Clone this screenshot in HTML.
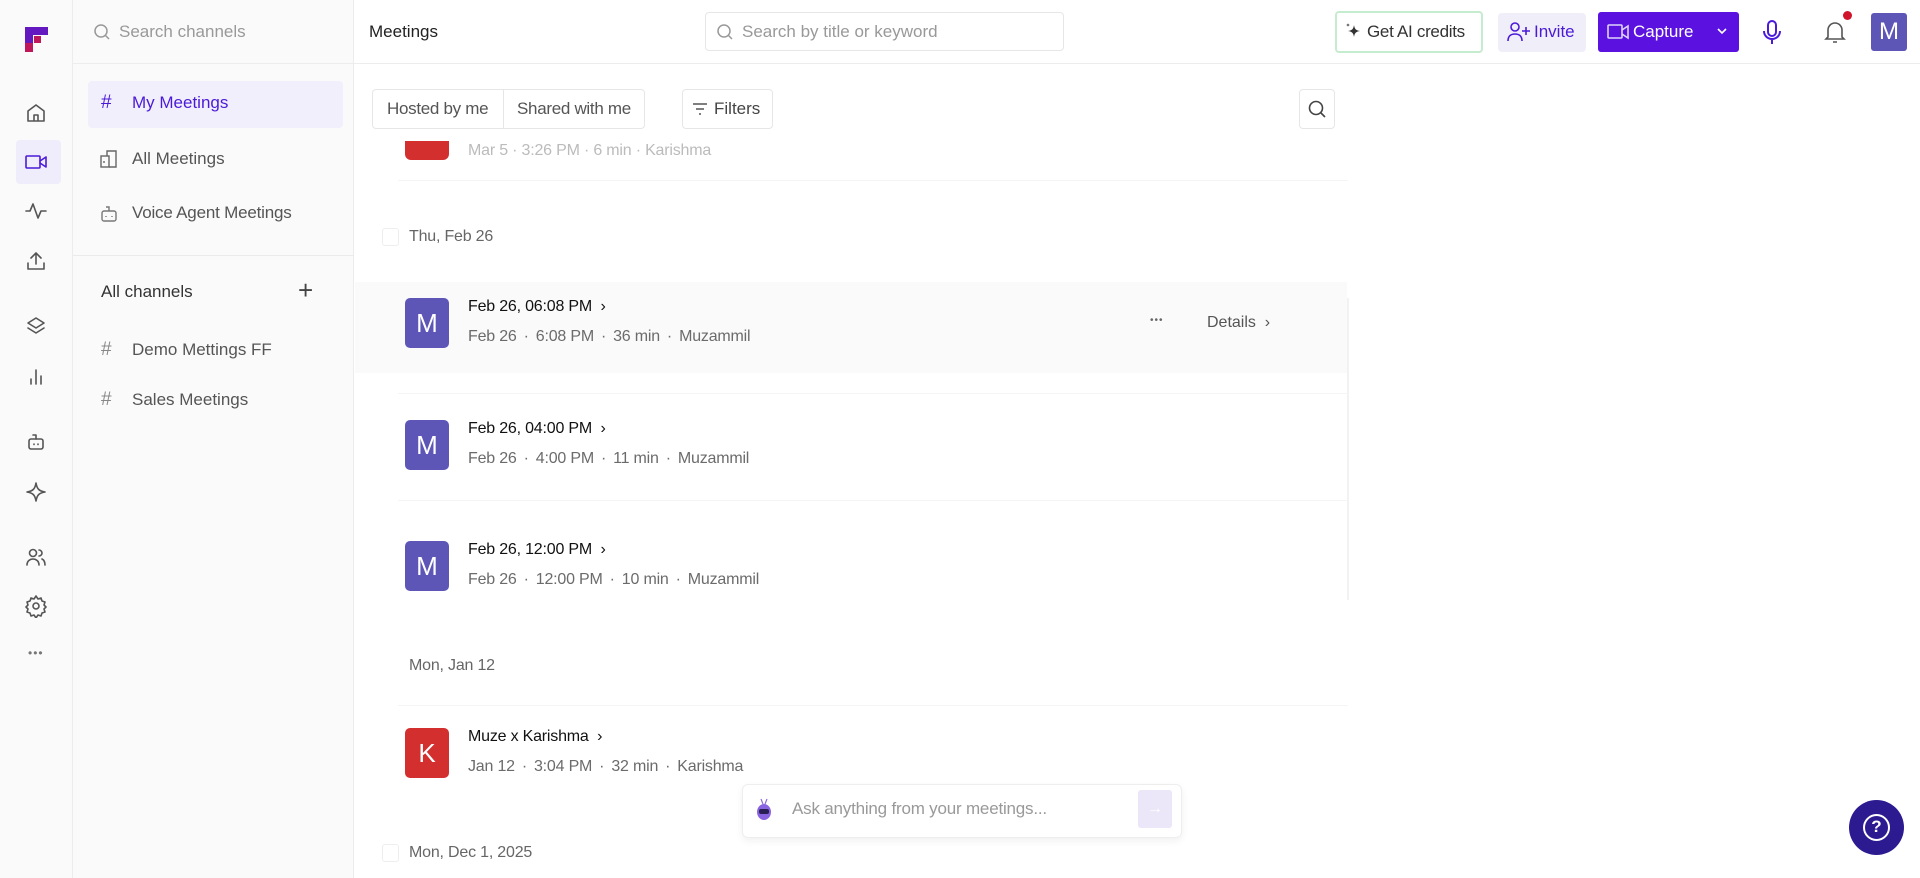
<!DOCTYPE html>
<html><head><meta charset="utf-8"><style>
*{box-sizing:border-box;margin:0;padding:0}
body{width:1920px;height:878px;overflow:hidden;background:#fff;font-family:"Liberation Sans",sans-serif;color:#1f1f1f;position:relative}
.abs{position:absolute}
.rail{left:0;top:0;width:73px;height:878px;background:#fafafa;border-right:1px solid #ececec}
.side{left:73px;top:0;width:281px;height:878px;background:#fafafa;border-right:1px solid #ececec}
.ic{position:absolute;left:24px;width:24px;height:24px;fill:none;stroke:#555;stroke-width:1.6;stroke-linecap:round;stroke-linejoin:round}
.t{position:absolute;white-space:nowrap}
.sub{color:#6b6b6b;font-size:16px;letter-spacing:-0.2px}
.av{position:absolute;left:405px;width:44px;height:50px;border-radius:5px;background:#5d56b7;color:#fff;font-size:26px;text-align:center;line-height:50px}
.sep{position:absolute;height:1px;background:#f5f5f5}
.d{margin:0 7px}
</style></head><body>
<div class="abs rail"></div>
<div class="abs side"></div>
<div class="abs" style="left:354px;top:63px;width:1566px;height:1px;background:#ededed"></div>
<div class="abs" style="left:73px;top:63px;width:281px;height:1px;background:#ededed"></div>

<svg class="abs" style="left:24px;top:26px" width="26" height="27" viewBox="0 0 26 27"><path d="M1 1h23v8H9v17H1z" fill="#c0175a"/><path d="M1 1h23v8H9v8H1z" fill="#4b1ad8" opacity=".8"/><rect x="10" y="10" width="7" height="7" fill="#c0175a"/></svg>

<svg class="ic" style="top:101px" viewBox="0 0 24 24"><path d="M4 10l8-6 8 6v10H4z M10 20v-6h4v6"/></svg>
<div class="abs" style="left:16px;top:140px;width:45px;height:44px;background:#efedfb;border-radius:4px"></div>
<svg class="ic" style="top:150px;stroke:#4b1ad8" viewBox="0 0 24 24"><rect x="2" y="6" width="14" height="12" rx="1"/><path d="M16 11l6-4v10l-6-4"/></svg>
<svg class="ic" style="top:199px" viewBox="0 0 24 24"><path d="M2 12h4l3-7 5 14 3-7h5"/></svg>
<svg class="ic" style="top:249px" viewBox="0 0 24 24"><path d="M12 15V4M7 9l5-5 5 5M4 14v6h16v-6"/></svg>
<svg class="ic" style="top:315px" viewBox="0 0 24 24"><path d="M12 3l8 5-8 5-8-5z M4 13l8 5 8-5"/></svg>
<svg class="ic" style="top:364px" viewBox="0 0 24 24"><path d="M7 20v-5M12 20V6M17 20v-8"/></svg>
<svg class="ic" style="top:430px" viewBox="0 0 24 24"><rect x="5" y="9" width="14" height="10" rx="2"/><path d="M12 9V5h-3M10 14v.5M14 14v.5"/></svg>
<svg class="ic" style="top:480px" viewBox="0 0 24 24"><path d="M12 3c1 6 3 8 9 9-6 1-8 3-9 9-1-6-3-8-9-9 6-1 8-3 9-9z"/></svg>
<svg class="ic" style="top:545px" viewBox="0 0 24 24"><circle cx="9" cy="8" r="3.5"/><path d="M3 20c0-4 3-6 6-6s6 2 6 6M15 5a3 3 0 010 6M18 14c2 1 3 3 3 6"/></svg>
<svg class="ic" style="top:594px" viewBox="0 0 24 24"><circle cx="12" cy="12" r="3"/><path d="M12 2l2 3 3-1 1 3 3 1-1 3 2 2-2 2 1 3-3 1-1 3-3-1-2 3-2-3-3 1-1-3-3-1 1-3-2-2 2-2-1-3 3-1 1-3 3 1z"/></svg>
<div class="t" style="left:28px;top:646px;font-size:12px;color:#777;letter-spacing:1px">•••</div>

<svg class="abs" style="left:93px;top:23px" width="18" height="18" viewBox="0 0 18 18" fill="none" stroke="#999" stroke-width="1.5"><circle cx="8" cy="8" r="6"/><path d="M12.5 12.5L16 16"/></svg>
<div class="t" style="left:119px;top:22px;font-size:17px;color:#999">Search channels</div>
<div class="abs" style="left:88px;top:81px;width:255px;height:47px;background:#f1effc;border-radius:4px"></div>
<div class="t" style="left:101px;top:92px;font-size:19px;color:#4b1ad8">#</div>
<div class="t" style="left:132px;top:93px;font-size:17px;color:#4b1ad8">My Meetings</div>
<svg class="abs" style="left:100px;top:149px" width="18" height="20" viewBox="0 0 18 20" fill="none" stroke="#666" stroke-width="1.4"><rect x="1" y="7" width="8" height="11"/><path d="M9 18h7V2H7v5M4 12v2"/></svg>
<div class="t" style="left:132px;top:149px;font-size:17px;color:#555">All Meetings</div>
<svg class="abs" style="left:100px;top:203px" width="18" height="20" viewBox="0 0 18 20" fill="none" stroke="#777" stroke-width="1.4"><rect x="2" y="8" width="14" height="10" rx="2"/><path d="M9 8V4H6M6 13v1M12 13v1"/></svg>
<div class="t" style="left:132px;top:203px;font-size:17px;color:#555;letter-spacing:-0.2px">Voice Agent Meetings</div>
<div class="abs" style="left:73px;top:255px;width:281px;height:1px;background:#ebebeb"></div>
<div class="t" style="left:101px;top:282px;font-size:17px;color:#333">All channels</div>
<div class="t" style="left:298px;top:275px;font-size:26px;color:#444;font-weight:300">+</div>
<div class="t" style="left:101px;top:339px;font-size:19px;color:#888">#</div>
<div class="t" style="left:132px;top:340px;font-size:17px;color:#555">Demo Mettings FF</div>
<div class="t" style="left:101px;top:389px;font-size:19px;color:#888">#</div>
<div class="t" style="left:132px;top:390px;font-size:17px;color:#555">Sales Meetings</div>

<div class="t" style="left:369px;top:22px;font-size:17px;color:#222">Meetings</div>
<div class="abs" style="left:705px;top:12px;width:359px;height:39px;border:1px solid #e6e6e6;border-radius:4px;background:#fff"></div>
<svg class="abs" style="left:716px;top:23px" width="18" height="18" viewBox="0 0 18 18" fill="none" stroke="#999" stroke-width="1.5"><circle cx="8" cy="8" r="6"/><path d="M12.5 12.5L16 16"/></svg>
<div class="t" style="left:742px;top:22px;font-size:17px;color:#999">Search by title or keyword</div>

<div class="abs" style="left:1335px;top:11px;width:148px;height:42px;border:2px solid #c6ecd0;border-radius:4px;background:#fff"></div>
<svg class="abs" style="left:1345px;top:22px" width="18" height="20" viewBox="0 0 18 20" fill="#333"><path d="M9 3c.6 4 2 5.5 6 6-4 .5-5.4 2-6 6-.6-4-2-5.5-6-6 4-.5 5.4-2 6-6z"/><path d="M3 1c.2 1.4.6 1.8 2 2-1.4.2-1.8.6-2 2-.2-1.4-.6-1.8-2-2 1.4-.2 1.8-.6 2-2z"/></svg>
<div class="t" style="left:1367px;top:22px;font-size:17px;color:#333;letter-spacing:-0.3px">Get AI credits</div>
<div class="abs" style="left:1498px;top:13px;width:88px;height:39px;background:#f0eef9;border-radius:4px"></div>
<svg class="abs" style="left:1506px;top:21px" width="26" height="22" viewBox="0 0 26 22" fill="none" stroke="#4b1ad8" stroke-width="1.6"><circle cx="9" cy="6" r="4"/><path d="M2 20c0-5 3-7 7-7s7 2 7 7M20 6v8M16 10h8"/></svg>
<div class="t" style="left:1534px;top:22px;font-size:17px;color:#4b1ad8">Invite</div>
<div class="abs" style="left:1598px;top:12px;width:141px;height:40px;background:#5b12e0;border-radius:3px"></div>
<svg class="abs" style="left:1607px;top:21px" width="24" height="22" viewBox="0 0 24 22" fill="none" stroke="#ddd3fb" stroke-width="1.6"><rect x="1" y="4" width="14" height="13" rx="1"/><path d="M15 9l6-4v12l-6-4"/></svg>
<div class="t" style="left:1633px;top:22px;font-size:17px;color:#fff">Capture</div>
<svg class="abs" style="left:1716px;top:26px" width="12" height="10" viewBox="0 0 12 10" fill="none" stroke="#fff" stroke-width="1.6"><path d="M2 3l4 4 4-4"/></svg>
<svg class="abs" style="left:1761px;top:19px" width="22" height="27" viewBox="0 0 22 27" fill="none" stroke="#4b1ad8" stroke-width="2"><rect x="7" y="2" width="8" height="15" rx="4"/><path d="M3 12c0 5 4 8 8 8s8-3 8-8M11 20v5"/></svg>
<svg class="abs" style="left:1823px;top:19px" width="24" height="26" viewBox="0 0 24 26" fill="none" stroke="#555" stroke-width="1.6"><path d="M5 18V11a7 7 0 0114 0v7l2 2H3z M10 23h4"/></svg>
<div class="abs" style="left:1843px;top:11px;width:9px;height:9px;border-radius:50%;background:#d0142c"></div>
<div class="abs" style="left:1871px;top:13px;width:36px;height:38px;background:#5d56b7;border-radius:3px;color:#fff;font-size:24px;text-align:center;line-height:38px">M</div>

<div class="abs" style="left:372px;top:89px;width:273px;height:40px;border:1px solid #e6e6e6;border-radius:4px"></div>
<div class="abs" style="left:503px;top:89px;width:1px;height:40px;background:#e6e6e6"></div>
<div class="t" style="left:387px;top:99px;font-size:17px;color:#555;letter-spacing:-0.3px">Hosted by me</div>
<div class="t" style="left:517px;top:99px;font-size:17px;color:#555;letter-spacing:-0.3px">Shared with me</div>
<div class="abs" style="left:682px;top:89px;width:91px;height:40px;border:1px solid #e6e6e6;border-radius:4px"></div>
<svg class="abs" style="left:692px;top:101px" width="16" height="16" viewBox="0 0 16 16" fill="none" stroke="#555" stroke-width="1.5"><path d="M1 3h14M4 8h8M7 13h2"/></svg>
<div class="t" style="left:714px;top:99px;font-size:17px;color:#444">Filters</div>
<div class="abs" style="left:1299px;top:89px;width:36px;height:40px;border:1px solid #e6e6e6;border-radius:4px"></div>
<svg class="abs" style="left:1307px;top:99px" width="20" height="20" viewBox="0 0 20 20" fill="none" stroke="#444" stroke-width="1.6"><circle cx="9" cy="9" r="6.5"/><path d="M14 14l4 4"/></svg>

<div class="abs" style="left:405px;top:141px;width:44px;height:19px;background:#d32f2f;border-radius:0 0 6px 6px"></div>
<div class="t sub" style="left:468px;top:142px;color:#bbb">Mar 5 · 3:26 PM · 6 min · Karishma</div>
<div class="sep" style="left:398px;top:180px;width:950px"></div>

<div class="abs" style="left:382px;top:228px;width:17px;height:18px;border:1px solid #eee;border-radius:3px"></div>
<div class="t sub" style="left:409px;top:228px;color:#666">Thu, Feb 26</div>

<div class="abs" style="left:355px;top:282px;width:992px;height:91px;background:#fafafa"></div>
<div class="abs" style="left:1347px;top:298px;width:2px;height:302px;background:#f2f2f2"></div>

<div class="av" style="top:298px">M</div>
<div class="t" style="left:468px;top:298px;font-size:16px;color:#111;letter-spacing:-0.2px">Feb 26, 06:08 PM &nbsp;›</div>
<div class="t sub" style="left:468px;top:328px">Feb 26<span class="d">·</span>6:08 PM<span class="d">·</span>36 min<span class="d">·</span>Muzammil</div>
<div class="t" style="left:1150px;top:315px;font-size:10px;color:#666;letter-spacing:1px">•••</div>
<div class="t" style="left:1207px;top:314px;font-size:16px;color:#555">Details &nbsp;›</div>
<div class="sep" style="left:398px;top:393px;width:950px"></div>

<div class="av" style="top:420px">M</div>
<div class="t" style="left:468px;top:420px;font-size:16px;color:#111;letter-spacing:-0.2px">Feb 26, 04:00 PM &nbsp;›</div>
<div class="t sub" style="left:468px;top:450px">Feb 26<span class="d">·</span>4:00 PM<span class="d">·</span>11 min<span class="d">·</span>Muzammil</div>
<div class="sep" style="left:398px;top:500px;width:950px"></div>

<div class="av" style="top:541px">M</div>
<div class="t" style="left:468px;top:541px;font-size:16px;color:#111;letter-spacing:-0.2px">Feb 26, 12:00 PM &nbsp;›</div>
<div class="t sub" style="left:468px;top:571px">Feb 26<span class="d">·</span>12:00 PM<span class="d">·</span>10 min<span class="d">·</span>Muzammil</div>

<div class="t sub" style="left:409px;top:657px;color:#666">Mon, Jan 12</div>
<div class="sep" style="left:398px;top:705px;width:950px"></div>

<div class="av" style="top:728px;background:#d32f2f">K</div>
<div class="t" style="left:468px;top:728px;font-size:16px;color:#111;letter-spacing:-0.2px">Muze x Karishma &nbsp;›</div>
<div class="t sub" style="left:468px;top:758px">Jan 12<span class="d">·</span>3:04 PM<span class="d">·</span>32 min<span class="d">·</span>Karishma</div>

<div class="abs" style="left:382px;top:844px;width:17px;height:18px;border:1px solid #eee;border-radius:3px"></div>
<div class="t sub" style="left:409px;top:844px;color:#666">Mon, Dec 1, 2025</div>

<div class="abs" style="left:742px;top:784px;width:440px;height:54px;background:#fff;border:1px solid #eee;border-radius:6px;box-shadow:0 3px 8px rgba(0,0,0,.06)"></div>
<svg class="abs" style="left:754px;top:797px" width="20" height="26" viewBox="0 0 20 26"><path d="M7 2l2 5M13 2l-2 5" stroke="#8a6ad8" stroke-width="1.2"/><ellipse cx="10" cy="15" rx="7" ry="8" fill="#8a63e0"/><rect x="5" y="12" width="10" height="5" rx="2" fill="#2a1f55"/></svg>
<div class="t" style="left:792px;top:799px;font-size:17px;color:#999;letter-spacing:-0.2px">Ask anything from your meetings...</div>
<div class="abs" style="left:1138px;top:790px;width:34px;height:38px;background:#ebe6f8;border-radius:3px;color:#fff;text-align:center;line-height:38px;font-size:16px">→</div>

<div class="abs" style="left:1849px;top:800px;width:55px;height:55px;border-radius:50%;background:#2c1a90"></div>
<div class="abs" style="left:1863px;top:814px;width:27px;height:27px;border-radius:50%;border:2.5px solid #fff;color:#fff;font-size:17px;font-weight:bold;text-align:center;line-height:22px">?</div>
</body></html>
